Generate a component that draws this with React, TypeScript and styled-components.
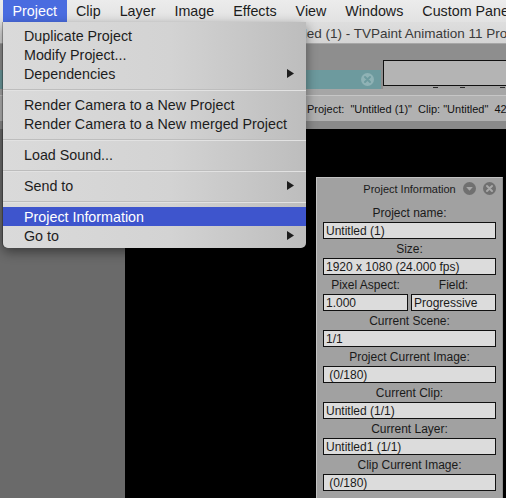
import React from "react";
import styled, { createGlobalStyle } from "styled-components";

const GlobalStyle = createGlobalStyle`
  html, body {
    margin: 0;
    padding: 0;
    background: #000;
  }
  body {
    font-family: "Liberation Sans", Arial, sans-serif;
  }
`;

type MenuEntry = { label: string; submenu?: boolean; active?: boolean } | "separator";

const menuBarItems = ["Project", "Clip", "Layer", "Image", "Effects", "View", "Windows", "Custom Panels"];

const projectMenu: MenuEntry[] = [
  { label: "Duplicate Project" },
  { label: "Modify Project..." },
  { label: "Dependencies", submenu: true },
  "separator",
  { label: "Render Camera to a New Project" },
  { label: "Render Camera to a New merged Project" },
  "separator",
  { label: "Load Sound..." },
  "separator",
  { label: "Send to", submenu: true },
  "separator",
  { label: "Project Information", active: true },
  { label: "Go to", submenu: true },
];

type Info = { label: string; value: string };
type InfoRow = Info | [Info, Info];

const infoRows: InfoRow[] = [
  { label: "Project name:", value: "Untitled (1)" },
  { label: "Size:", value: "1920 x 1080 (24.000 fps)" },
  [
    { label: "Pixel Aspect:", value: "1.000" },
    { label: "Field:", value: "Progressive" },
  ],
  { label: "Current Scene:", value: "1/1" },
  { label: "Project Current Image:", value: " (0/180)" },
  { label: "Current Clip:", value: "Untitled (1/1)" },
  { label: "Current Layer:", value: "Untitled1 (1/1)" },
  { label: "Clip Current Image:", value: " (0/180)" },
];

const ticks = [50, 27, 40];

/* ---------- screen ---------- */

const Screen = styled.div`
  position: relative;
  width: 506px;
  height: 498px;
  overflow: hidden;
  display: flex;
  flex-direction: column;
  background: #000;
`;

/* ---------- mac menu bar ---------- */

const MenuBar = styled.div`
  height: 22px;
  flex: none;
  display: flex;
  padding-left: 3px;
  background: linear-gradient(#ececec, #e2e2e2);
  white-space: nowrap;
  overflow: hidden;
`;

const MenuTitle = styled.div<{ $open?: boolean }>`
  display: flex;
  align-items: center;
  padding: 0 9.5px;
  font-size: 14.3px;
  color: ${(p) => (p.$open ? "#fff" : "#1c1c1c")};
  background: ${(p) => (p.$open ? "#4a6ce0" : "transparent")};
`;

/* ---------- TVPaint window behind ---------- */

const AppWindow = styled.div`
  flex: 1;
  display: flex;
  flex-direction: column;
`;

const TitleBar = styled.div`
  height: 22px;
  flex: none;
  display: flex;
  align-items: center;
  padding: 1px 0 0 276px;
  box-sizing: border-box;
  background: linear-gradient(#dedede, #d4d4d4);
  border-bottom: 1px solid #a6a6a6;
  font-size: 13.5px;
  color: #3a3a3a;
  white-space: nowrap;
`;

const Toolbar = styled.div`
  height: 16px;
  flex: none;
  background: #8e8e8e;
`;

const TabStrip = styled.div`
  height: 29px;
  flex: none;
  display: flex;
  gap: 2px;
  background: #8e8e8e;
`;

const TabArea = styled.div`
  flex: 1;
  display: flex;
  align-items: flex-end;
`;

const Tab = styled.div`
  flex: 1;
  height: 19px;
  display: flex;
  align-items: center;
  justify-content: flex-end;
  padding-right: 7px;
  background: #6d9a9e;
`;

const TimelineColumn = styled.div`
  width: 123px;
  flex: none;
  display: flex;
  flex-direction: column;
`;

const ScrubBox = styled.div`
  height: 24px;
  border: 1px solid #111;
  border-right: none;
  background: #b4b4b4;
`;

const TickBand = styled.div`
  flex: 1;
  display: flex;
  align-items: center;
  background: #a3a3a3;
`;

const Tick = styled.span<{ $offset: number }>`
  width: 5px;
  height: 1px;
  margin-left: ${(p) => p.$offset}px;
  background: #2c2c2c;
`;

const GapBand = styled.div`
  height: 6px;
  flex: none;
  background: #a6a6a6;
`;

const StatusBar = styled.div`
  height: 25px;
  flex: none;
  display: flex;
  align-items: center;
  padding-left: 307px;
  border-top: 1px solid #c6c6c6;
  background: #b1b1b1;
  font-size: 11px;
  color: #111;
  white-space: pre;
  overflow: hidden;
`;

const Divider = styled.div`
  height: 8px;
  flex: none;
  background: #8a8a8a;
`;

const Workspace = styled.div`
  flex: 1;
  display: flex;
`;

const Sidebar = styled.div`
  width: 125px;
  flex: none;
  background: #6a6a6a;
`;

const Canvas = styled.div`
  flex: 1;
  background: #000;
`;

/* ---------- dropdown ---------- */

const Dropdown = styled.div`
  position: absolute;
  left: 3px;
  top: 22px;
  width: 303px;
  padding: 4px 0 3px;
  box-sizing: border-box;
  display: flex;
  flex-direction: column;
  background: linear-gradient(to right, #dadada, #d3d3d3 55%, #bdbdbd);
  border-radius: 0 0 5px 5px;
  box-shadow: 0 4px 12px rgba(0, 0, 0, 0.45), -1px 0 0 rgba(0, 0, 0, 0.25);
`;

const MenuItem = styled.div<{ $active?: boolean }>`
  height: 19px;
  display: flex;
  align-items: center;
  justify-content: space-between;
  padding: 0 12px 0 21px;
  font-size: 14.3px;
  color: ${(p) => (p.$active ? "#fff" : "#1d1d1d")};
  background: ${(p) => (p.$active ? "#3e55cd" : "transparent")};
  white-space: nowrap;
`;

const Separator = styled.div`
  height: 12px;
  display: flex;
  align-items: center;
  &::after {
    content: "";
    flex: 1;
    height: 1px;
    background: #bdbdbd;
    box-shadow: 0 1px 0 #e2e2e2;
  }
`;

const SubArrow = () => (
  <svg width="7" height="9" viewBox="0 0 7 9">
    <polygon points="0,0 7,4.5 0,9" fill="#1d1d1d" />
  </svg>
);

const TabClose = () => (
  <svg width="13" height="13" viewBox="0 0 13 13">
    <circle cx="6.5" cy="6.5" r="6.5" fill="#8fb2b5" />
    <path d="M4 4 L9 9 M9 4 L4 9" stroke="#6d9a9e" strokeWidth="2" strokeLinecap="round" />
  </svg>
);

/* ---------- floating panel ---------- */

const Panel = styled.div`
  position: absolute;
  left: 316px;
  top: 177px;
  width: 187px;
  bottom: -4px;
  box-sizing: border-box;
  padding: 0 6px;
  background: #a1a1a1;
  border: 1px solid #c2c2c2;
  border-right-color: #8c8c8c;
  font-size: 12px;
  color: #1a1a1a;
`;

const PanelHeader = styled.div`
  position: relative;
  height: 25px;
  padding-bottom: 4px;
  box-sizing: border-box;
  display: flex;
  align-items: center;
  justify-content: center;
  font-size: 11px;
`;

const HeaderIcons = styled.div`
  position: absolute;
  right: 0;
  top: 4px;
  display: flex;
  gap: 7px;
`;

const FieldLabel = styled.div`
  height: 19px;
  display: flex;
  align-items: center;
  justify-content: center;
  white-space: nowrap;
`;

const FieldBox = styled.div`
  height: 17px;
  box-sizing: border-box;
  display: flex;
  align-items: center;
  padding-left: 2px;
  background: #dcdcdc;
  border: 1px solid #111;
  white-space: pre;
`;

const PairRow = styled.div`
  display: grid;
  grid-template-columns: 1fr 1fr;
  column-gap: 3px;
`;

const CollapseIcon = () => (
  <svg width="13" height="13" viewBox="0 0 13 13">
    <circle cx="6.5" cy="6.5" r="6.5" fill="#707070" />
    <polygon points="3.2,5 9.8,5 6.5,8.8" fill="#a8a8a8" />
  </svg>
);

const CloseIcon = () => (
  <svg width="13" height="13" viewBox="0 0 13 13">
    <circle cx="6.5" cy="6.5" r="6.5" fill="#707070" />
    <path d="M4 4 L9 9 M9 4 L4 9" stroke="#a8a8a8" strokeWidth="2" strokeLinecap="round" />
  </svg>
);

const Field = ({ label, value }: Info) => (
  <div>
    <FieldLabel>{label}</FieldLabel>
    <FieldBox>{value}</FieldBox>
  </div>
);

export default function App() {
  return (
    <Screen>
      <GlobalStyle />
      <MenuBar>
        {menuBarItems.map((item, i) => (
          <MenuTitle key={item} $open={i === 0}>
            {item}
          </MenuTitle>
        ))}
      </MenuBar>

      <AppWindow>
        <TitleBar>Untitled (1) - TVPaint Animation 11 Pro</TitleBar>
        <Toolbar />
        <TabStrip>
          <TabArea>
            <Tab>
              <TabClose />
            </Tab>
          </TabArea>
          <TimelineColumn>
            <ScrubBox />
            <TickBand>
              {ticks.map((t, i) => (
                <Tick key={i} $offset={i === 0 ? t : t - 5} />
              ))}
            </TickBand>
          </TimelineColumn>
        </TabStrip>
        <GapBand />
        <StatusBar>{'Project:  "Untitled (1)"  Clip: "Untitled"  42'}</StatusBar>
        <Divider />
        <Workspace>
          <Sidebar />
          <Canvas />
        </Workspace>
      </AppWindow>

      <Dropdown>
        {projectMenu.map((entry, i) =>
          entry === "separator" ? (
            <Separator key={i} />
          ) : (
            <MenuItem key={i} $active={entry.active}>
              <span>{entry.label}</span>
              {entry.submenu && <SubArrow />}
            </MenuItem>
          )
        )}
      </Dropdown>

      <Panel>
        <PanelHeader>
          Project Information
          <HeaderIcons>
            <CollapseIcon />
            <CloseIcon />
          </HeaderIcons>
        </PanelHeader>
        {infoRows.map((row, i) =>
          Array.isArray(row) ? (
            <PairRow key={i}>
              <Field {...row[0]} />
              <Field {...row[1]} />
            </PairRow>
          ) : (
            <Field key={i} {...row} />
          )
        )}
      </Panel>
    </Screen>
  );
}
